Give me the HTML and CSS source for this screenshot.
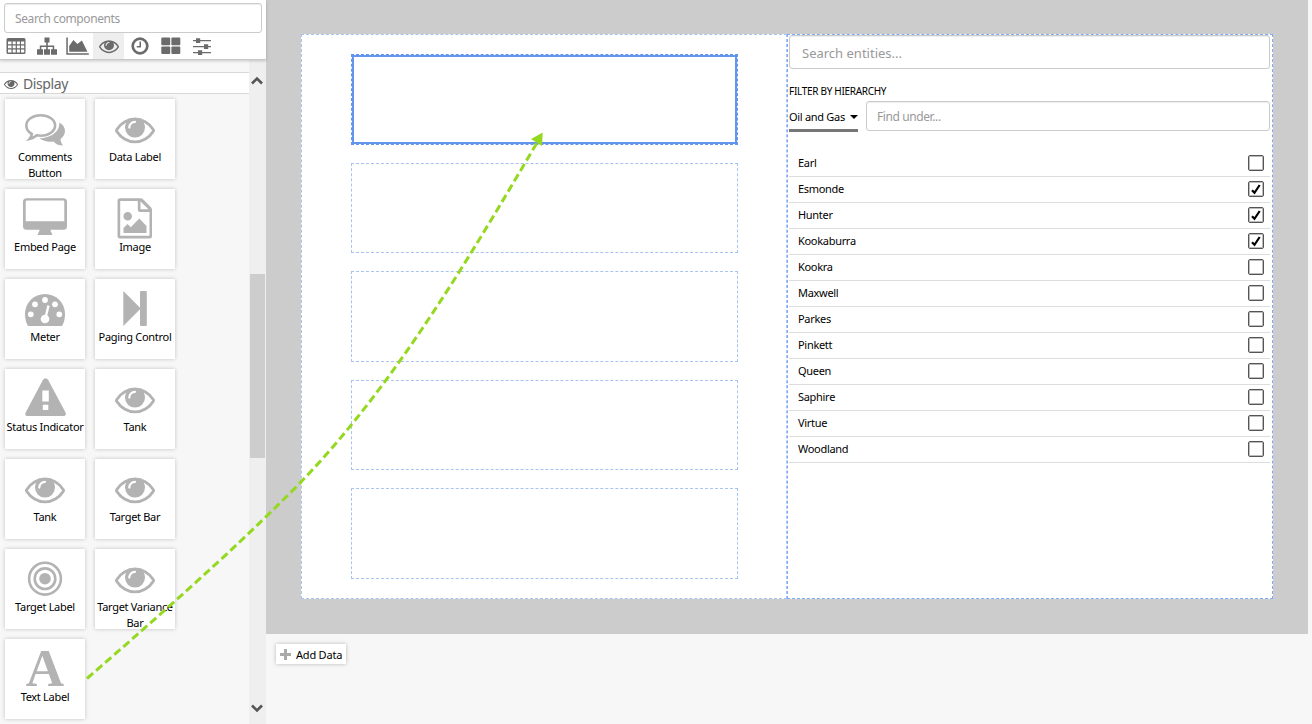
FILE: index.html
```
<!DOCTYPE html>
<html lang="en">
<head>
  <meta charset="UTF-8">
  <meta name="viewport" content="width=device-width, initial-scale=1.0">
  <title>Page Designer</title>
  <link rel="stylesheet" href="styles.css">
</head>
<body>
  <svg class="defs" width="0" height="0">
    <symbol id="eye" viewBox="0 0 1792 1792">
      <path d="M1664 960q-152-236-381-353 61 104 61 225 0 185-131.5 316.5t-316.5 131.5-316.5-131.5-131.5-316.5q0-121 61-225-229 117-381 353 133 205 333.5 326.5t434.5 121.5 434.5-121.5 333.5-326.5zm-720-384q0-20-14-34t-34-14q-125 0-214.5 89.5t-89.5 214.5q0 20 14 34t34 14 34-14 14-34q0-86 61-147t147-61q20 0 34-14t14-34zm848 384q0 34-20 69-140 230-376.5 368.5t-499.5 138.5-499.5-139-376.5-368q-20-35-20-69t20-69q140-229 376.5-368t499.5-139 499.5 139 376.5 368q20 35 20 69z"/>
    </symbol>
  </svg>

  <div class="app">
    <aside class="sidebar">
      <div class="toolbox">
        <input class="search" type="text" placeholder="Search components">
        <div class="tabs">
          <span class="tab">
            <svg viewBox="0 0 20 20"><path fill-rule="evenodd" d="M2 2h16a1.500 1.500 0 0 1 1.500 1.500v13A1.500 1.500 0 0 1 18 18H2a1.500 1.500 0 0 1-1.500-1.500v-13A1.500 1.500 0 0 1 2 2zM2 5.500v2.800h3.500V5.500zM6.700 5.500v2.800h3V5.500zM10.900 5.500v2.800h3V5.500zM15 5.500v2.800h3.200V5.500zM2 9.500v2.800h3.500V9.500zM6.700 9.500v2.800h3V9.500zM10.900 9.500v2.800h3V9.500zM15 9.500v2.800h3.200V9.500zM2 13.600v2.900h3.500v-2.900zM6.700 13.600v2.900h3v-2.900zM10.900 13.600v2.900h3v-2.900zM15 13.600v2.900h3.200v-2.900z"/></svg>
          </span>
          <span class="tab">
            <svg viewBox="0 0 20 20"><path d="M7.500 1.500h5v5h-1.700v3h6.400v3.700H20v5.500h-6v-5.500h1.700V11h-4.900v2.200H13v5.500H7v-5.500h2.200V11H4.300v2.200H6v5.500H0v-5.500h2.800V9.500h6.400v-3H7.500z"/></svg>
          </span>
          <span class="tab">
            <svg class="wide" viewBox="0 0 23 20"><path d="M.3 1.500h1.500v15.700h21v1.500H.3zM3.200 15.800V10l4.200-6 4 4 4.500-3.500 5.500 11.300z"/></svg>
          </span>
          <span class="tab active">
            <svg viewBox="0 0 20 20"><use href="#eye"/></svg>
          </span>
          <span class="tab">
            <svg viewBox="0 0 20 20"><circle cx="10" cy="10" r="7.300" fill="none" stroke="currentColor" stroke-width="2.700"/><path d="M9.500 5.500H11v6H6.700V10h2.800z"/></svg>
          </span>
          <span class="tab">
            <svg viewBox="0 0 20 20"><rect x=".3" y="1.600" width="8.900" height="7.600" rx="1"/><rect x="10.400" y="1.600" width="8.900" height="7.600" rx="1"/><rect x=".3" y="10.400" width="8.900" height="7.600" rx="1"/><rect x="10.400" y="10.400" width="8.900" height="7.600" rx="1"/></svg>
          </span>
          <span class="tab">
            <svg viewBox="0 0 20 20"><path d="M1 4h18v1.300H1zM1 10h18v1.300H1zM1 16h18v1.300H1zM4 2.300h4.200V7H4zM12 8.300h4.200V13H12zM6 14.300h4.200V19H6z"/></svg>
          </span>
        </div>
      </div>

      <div class="palette">
        <div class="palette-list">
          <h2 class="group-title"><svg viewBox="0 0 20 20"><use href="#eye"/></svg>Display</h2>
          <div class="tiles">
            <div class="tile">
              <svg viewBox="0 0 40 40">
                <path d="M34.500 13.500c3.500 2 5.500 5 5.500 8.500 0 3.200-1.800 6-4.500 8 .2 2.500 1 4.500 2.500 6.500-4 0-6.500-1-9.500-4-5.500.8-10.300-.3-14-3.200 11-.3 20-5.800 20-15.800z"/>
                <path fill="none" stroke="currentColor" stroke-width="2.600" d="M15.700 6.300c8 0 14.400 4.500 14.400 10.200s-6.400 10.200-14.400 10.200c-1.300 0-2.600-.1-3.900-.4-2.200 2-4.500 3-7.300 3.700 1.300-1.500 2.100-3 2.300-5-3.500-2-5.500-5-5.500-8.500C1.300 10.800 7.700 6.300 15.700 6.300z"/>
              </svg>
              <span>Comments Button</span>
            </div>
            <div class="tile"><svg viewBox="0 0 40 40"><use href="#eye"/></svg><span>Data Label</span></div>
            <div class="tile">
              <svg viewBox="0 0 40 40"><path fill-rule="evenodd" d="M1.500-.7h37A3.500 3.500 0 0 1 42 2.800v24.500a3.500 3.500 0 0 1-3.500 3.500H25.500c0 2.500 1.800 3 1.800 5.200H12.700c0-2.200 1.800-2.700 1.800-5.200H1.500A3.500 3.500 0 0 1-2 27.300V2.800A3.500 3.500 0 0 1 1.500-.7zM2 1.500Q.7 1.500.7 2.800v19.400h38.600V2.800q0-1.300-1.300-1.300z"/></svg>
              <span>Embed Page</span>
            </div>
            <div class="tile">
              <svg viewBox="0 0 40 40"><path fill-rule="evenodd" d="M5-.7h20.500q1.500 0 2.500 1l8 8q1 1 1 2.500V37q0 2.500-2.500 2.500H5Q2.500 39.500 2.500 37V1.800Q2.500-.7 5-.7zM5.200 2v34.800h29.300V13H25q-2.200 0-2.200-2.200V2zM25.500 2.500v7.800h8zM12.700 13a4.300 4.300 0 1 1 0 8.600 4.300 4.300 0 0 1 0-8.600zM8.500 34v-5l4-4 3.300 3.200 8.500-8.700L31.500 27v7z"/></svg>
              <span>Image</span>
            </div>
            <div class="tile">
              <svg viewBox="0 0 40 40"><path d="M3 37Q0 32 0 25a20 20 0 0 1 40 0q0 7-3 12z"/><g fill="#fff"><circle cx="5.800" cy="25.300" r="2.900"/><circle cx="10" cy="15.300" r="2.900"/><circle cx="20" cy="11" r="2.900"/><circle cx="30" cy="15.300" r="2.900"/><circle cx="34.300" cy="25.300" r="2.900"/><circle cx="20" cy="30" r="4.300"/></g><path fill="none" stroke="#fff" stroke-width="2.400" d="M20.700 28l2.800-11.500"/></svg>
              <span>Meter</span>
            </div>
            <div class="tile">
              <svg viewBox="0 0 40 40"><path d="M8.300 2l17.500 17.500L8.300 37z"/><rect x="25" y="2" width="6.800" height="35" rx="1"/></svg>
              <span>Paging Control</span>
            </div>
            <div class="tile">
              <svg viewBox="0 0 40 40"><path fill-rule="evenodd" d="M20.500-.8q1.700 0 2.700 1.700l17.200 32.300Q42 36.800 38.500 37h-36Q-.9 36.800.8 33.200L17.900.9q1-1.700 2.600-1.700zM17.300 11.500v11h6.500v-11zM17.800 25.700V31h5.500v-5.300z"/></svg>
              <span>Status Indicator</span>
            </div>
            <div class="tile"><svg viewBox="0 0 40 40"><use href="#eye"/></svg><span>Tank</span></div>
            <div class="tile"><svg viewBox="0 0 40 40"><use href="#eye"/></svg><span>Tank</span></div>
            <div class="tile"><svg viewBox="0 0 40 40"><use href="#eye"/></svg><span>Target Bar</span></div>
            <div class="tile">
              <svg viewBox="0 0 40 40"><circle cx="20" cy="19.700" r="5.800"/><g fill="none" stroke="currentColor" stroke-width="2.600"><circle cx="20" cy="19.700" r="10.300"/><circle cx="20" cy="19.700" r="15.900"/></g></svg>
              <span>Target Label</span>
            </div>
            <div class="tile"><svg viewBox="0 0 40 40"><use href="#eye"/></svg><span>Target Variance Bar</span></div>
            <div class="tile">
              <svg viewBox="0 0 40 40"><text class="letter" x="20" y="36.500" text-anchor="middle">A</text></svg>
              <span>Text Label</span>
            </div>
          </div>
        </div>
        <div class="scrollbar">
          <svg viewBox="0 0 12 9"><path d="M1 7.500l5-5 5 5"/></svg>
          <div class="track"><div class="thumb"></div></div>
          <svg viewBox="0 0 12 9"><path d="M1 1.500l5 5 5-5"/></svg>
        </div>
      </div>
    </aside>

    <main class="main">
      <div class="canvas">
        <div class="page">
          <section class="column slots">
            <div class="slot selected"><div class="slot-focus"></div></div>
            <div class="slot"></div>
            <div class="slot"></div>
            <div class="slot"></div>
            <div class="slot"></div>
          </section>
          <section class="column filter">
            <input class="search-entities" type="text" placeholder="Search entities...">
            <div class="filter-title">FILTER BY HIERARCHY</div>
            <div class="hierarchy">
              <div class="dropdown"><span>Oil and Gas</span><i class="caret"></i></div>
              <input class="find" type="text" placeholder="Find under...">
            </div>
            <ul class="entities" id="entities"></ul>
          </section>
        </div>
      </div>
      <div class="footer">
        <button class="add-data"><svg viewBox="0 0 11 11"><path d="M4 0h3v4h4v3H7v4H4V7H0V4h4z"/></svg>Add Data</button>
      </div>
    </main>
  </div>

  <!-- drag path from the Text Label tile to the selected slot -->
  <svg class="drag-path" viewBox="0 0 1312 724">
    <path class="drag-line" d="M87 678.500C160 615 230 553 283 500C385 401 465 265 538 141"/>
    <path class="drag-head" d="M542.700 132.500l-.7 13.500-11-7z"/>
  </svg>

  <script>
    const entities = [
      { name: "Earl", checked: false },
      { name: "Esmonde", checked: true },
      { name: "Hunter", checked: true },
      { name: "Kookaburra", checked: true },
      { name: "Kookra", checked: false },
      { name: "Maxwell", checked: false },
      { name: "Parkes", checked: false },
      { name: "Pinkett", checked: false },
      { name: "Queen", checked: false },
      { name: "Saphire", checked: false },
      { name: "Virtue", checked: false },
      { name: "Woodland", checked: false }
    ];

    const tick = '<svg viewBox="0 0 14 14"><path d="M3 8.200l2.500 2.600L10.700 3"/></svg>';

    function renderEntities() {
      const list = document.getElementById("entities");
      list.innerHTML = "";
      entities.forEach((entity) => {
        const li = document.createElement("li");
        li.innerHTML = `<span>${entity.name}</span><span class="box">${entity.checked ? tick : ""}</span>`;
        li.onclick = () => {
          entity.checked = !entity.checked;
          renderEntities();
        };
        list.appendChild(li);
      });
    }

    renderEntities();
  </script>
</body>
</html>
```
FILE: styles.css
```
* {
  box-sizing: border-box;
}

body {
  margin: 0;
  font-family: "Noto Sans", "Open Sans", sans-serif;
  font-size: 11px;
  letter-spacing: -0.3px;
  color: #000;
  background-color: #f7f7f7;
  overflow: hidden;
}

.defs {
  position: absolute;
}

svg {
  fill: currentColor;
  overflow: visible;
}

input {
  font-family: inherit;
  border: 1px solid #ccc;
  border-radius: 3px;
  background-color: #fff;
  box-shadow: inset 0 1px 1px rgba(0, 0, 0, 0.075);
  outline: none;
}

input::placeholder {
  color: #999;
  opacity: 1;
}

.app {
  display: flex;
  height: 724px;
}

/* sidebar */
.sidebar {
  display: flex;
  flex-direction: column;
  width: 266px;
}

.toolbox {
  height: 60px;
  padding: 3px 4px 0;
  background-color: #fff;
  border-bottom: 1px solid #c8c8c8;
  box-shadow: 0 1px 3px rgba(0, 0, 0, 0.2);
  z-index: 1;
}

.search {
  display: block;
  width: 258px;
  height: 30px;
  padding: 1px 10px 0;
  font-size: 12px;
  letter-spacing: -0.4px;
}

.tabs {
  display: flex;
  margin-left: -4px;
}

.tab {
  display: flex;
  align-items: center;
  justify-content: center;
  width: 31px;
  height: 26px;
  color: #6b6b6b;
}

.tab svg {
  width: 20px;
  height: 20px;
}

.tab .wide {
  width: 23px;
}

.tab.active {
  background-color: #eee;
}

.palette {
  display: flex;
  flex: 1;
  min-height: 0;
}

.palette-list {
  flex: 1;
  padding-top: 12px;
}

.group-title {
  display: flex;
  align-items: center;
  gap: 5px;
  height: 22px;
  margin: 0;
  padding: 1px 0 0 4px;
  font-size: 14px;
  font-weight: normal;
  letter-spacing: -0.4px;
  color: #666;
  background-color: #fff;
  border-top: 1px solid #d8d8d8;
  border-bottom: 1px solid #d8d8d8;
}

.group-title svg {
  width: 14px;
  height: 14px;
}

.tiles {
  display: grid;
  grid-template-columns: 80px 80px;
  grid-auto-rows: 80px;
  gap: 10px;
  padding: 5px;
}

.tile {
  display: flex;
  flex-direction: column;
  align-items: center;
  padding-top: 10px;
  line-height: 16px;
  text-align: center;
  background-color: #fff;
  box-shadow: 0 0 4px rgba(0, 0, 0, 0.22);
}

.tile svg {
  flex: none;
  width: 40px;
  height: 40px;
  color: #b3b3b3;
}

.tile span {
  margin: 0 -2px;
}

.letter {
  font-family: "Liberation Serif", serif;
  font-size: 53px;
  font-weight: bold;
  letter-spacing: 0;
}

.scrollbar {
  display: flex;
  flex-direction: column;
  align-items: center;
  width: 17px;
  padding: 16px 1px 11px 0;
  background-color: #efefef;
}

.scrollbar svg {
  width: 12px;
  height: 9px;
  fill: none;
  stroke: #555;
  stroke-width: 2.6;
}

.track {
  flex: 1;
  width: 15px;
}

.thumb {
  height: 184px;
  margin-top: 189px;
  background-color: #cdcdcd;
}

/* design surface */
.main {
  flex: 1;
}

.canvas {
  width: 1042px;
  height: 634px;
  padding: 34px 35px 0;
  background-color: #ccc;
}

.page {
  display: flex;
  height: 565px;
  background-color: #fff;
}

.column {
  border: 1px dashed #a9c3f0;
}

.slots {
  display: flex;
  flex-direction: column;
  gap: 18px;
  width: 486px;
  padding: 19px 48px 19px 49px;
}

.slot {
  flex: 1;
  border: 1px dashed #a9c3f0;
}

.slot.selected {
  border-color: #6495ed;
}

.slot-focus {
  height: 100%;
  border: 2px solid #6495ed;
}

.filter {
  flex: 1;
  padding: 0 2px 0 1px;
  border-color: #7eaaf8;
}

.search-entities {
  display: block;
  width: 100%;
  height: 34px;
  padding: 2px 12px 0;
  font-size: 13px;
}

.filter-title {
  margin-top: 15px;
  font-size: 10px;
  line-height: 15px;
}

.hierarchy {
  display: flex;
  gap: 8px;
  margin-top: 2px;
}

.dropdown {
  display: flex;
  align-items: center;
  justify-content: space-between;
  width: 69px;
  height: 31px;
  padding-top: 3px;
  border-bottom: 3px solid #777;
  white-space: nowrap;
}

.caret {
  border: 4px solid transparent;
  border-top-color: #000;
  border-bottom: 0;
}

.find {
  flex: 1;
  height: 30px;
  padding: 1px 10px 0;
  font-size: 12px;
  letter-spacing: -0.4px;
}

.entities {
  margin: 19px 0 0;
  padding: 0;
  list-style-type: none;
}

.entities li {
  display: flex;
  align-items: center;
  justify-content: space-between;
  height: 26px;
  padding: 0 6px 2px 9px;
  border-bottom: 1px solid #ddd;
  cursor: pointer;
}

.box {
  width: 16px;
  height: 16px;
  border: 1px solid #555;
  border-radius: 2px;
  box-shadow: inset 0 0 0 1px #bbb;
}

.box svg {
  display: block;
  fill: none;
  stroke: #000;
  stroke-width: 2.2;
}

.footer {
  padding: 10px;
}

.add-data {
  display: flex;
  align-items: center;
  gap: 5px;
  height: 20px;
  padding: 0 4px;
  font-family: inherit;
  font-size: 11px;
  letter-spacing: -0.2px;
  color: #000;
  background-color: #fff;
  border: none;
  box-shadow: 0 0 4px rgba(0, 0, 0, 0.25);
}

.add-data svg {
  width: 11px;
  height: 11px;
  color: #aaa;
}

/* lies over the whole designer */
.drag-path {
  position: absolute;
  top: 0;
  left: 0;
  width: 1312px;
  height: 724px;
  pointer-events: none;
}

.drag-line {
  fill: none;
  stroke: #95d820;
  stroke-width: 3;
  stroke-dasharray: 8 4;
}

.drag-head {
  fill: #95d820;
}
```
